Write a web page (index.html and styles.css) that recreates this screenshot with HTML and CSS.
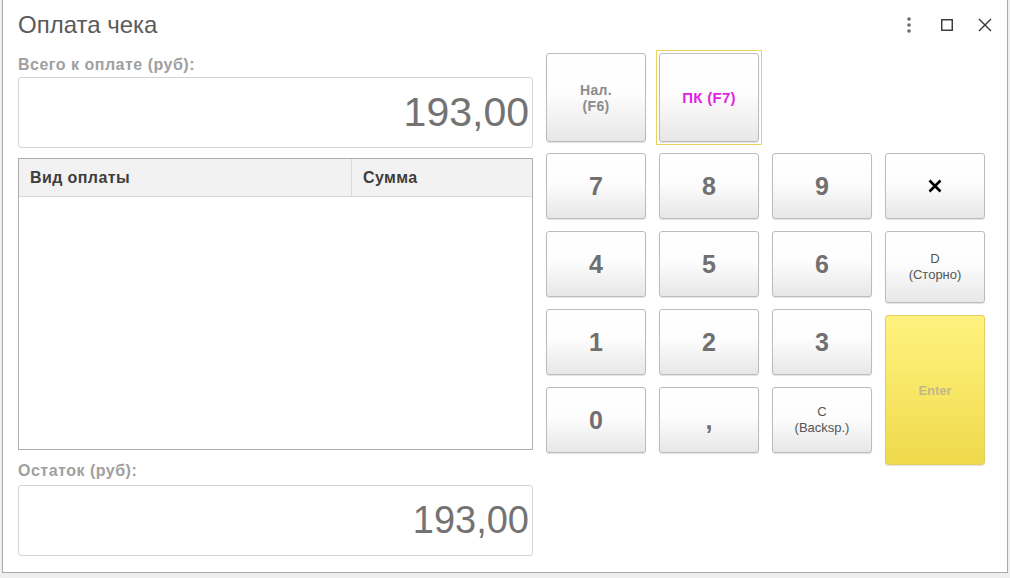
FILE: index.html
```html
<!DOCTYPE html>
<html lang="ru">
<head>
    <meta charset="UTF-8">
    <meta name="viewport" content="width=device-width, initial-scale=1.0">
    <title>Оплата чека</title>
    <link rel="stylesheet" href="styles.css">
</head>
<body>
    <div class="window">
        <header class="titlebar">
            <h1 class="title">Оплата чека</h1>
            <div class="win-actions">
                <span class="win-btn">
                    <svg width="4" height="16" viewBox="0 0 4 16"><circle cx="2" cy="2" r="1.8"/><circle cx="2" cy="8" r="1.8"/><circle cx="2" cy="14" r="1.8"/></svg>
                </span>
                <span class="win-btn">
                    <svg width="12" height="12" viewBox="0 0 12 12"><rect x="0.75" y="0.75" width="10.5" height="10.5"/></svg>
                </span>
                <span class="win-btn">
                    <svg width="14" height="14" viewBox="0 0 14 14"><path d="M1 1 L13 13 M13 1 L1 13"/></svg>
                </span>
            </div>
        </header>

        <div class="content">
            <section class="left">
                <div class="field-label">Всего к оплате (руб):</div>
                <div class="amount">193,00</div>

                <div class="payments">
                    <div class="payments-head">
                        <div class="head-cell col-type">Вид оплаты</div>
                        <div class="head-cell col-sum">Сумма</div>
                    </div>
                </div>

                <div class="field-label label-rest">Остаток (руб):</div>
                <div class="amount amount-rest">193,00</div>
            </section>

            <section class="pad">
                <div class="pay-types">
                    <button class="key key-type">Нал.<br>(F6)</button>
                    <div class="selected">
                        <button class="key key-type key-card">ПК (F7)</button>
                    </div>
                </div>

                <div class="keypad">
                    <div class="digits">
                        <button class="key digit">7</button>
                        <button class="key digit">8</button>
                        <button class="key digit">9</button>
                        <button class="key digit">4</button>
                        <button class="key digit">5</button>
                        <button class="key digit">6</button>
                        <button class="key digit">1</button>
                        <button class="key digit">2</button>
                        <button class="key digit">3</button>
                        <button class="key digit">0</button>
                        <button class="key digit">,</button>
                        <button class="key key-small">C<br>(Backsp.)</button>
                    </div>
                    <div class="side">
                        <button class="key key-clear">
                            <svg width="14" height="14" viewBox="0 0 14 14"><path d="M1.5 1.5 L12.5 12.5 M12.5 1.5 L1.5 12.5"/></svg>
                        </button>
                        <button class="key key-small key-storno">D<br>(Сторно)</button>
                        <button class="key key-enter">Enter</button>
                    </div>
                </div>
            </section>
        </div>
    </div>
</body>
</html>
```

FILE: styles.css
```css
body {
    margin: 0;
    padding-left: 2px;
    background-color: #efefef;
    font-family: "Liberation Sans", Arial, sans-serif;
}
.window {
    width: 1006px;
    height: 573px;
    box-sizing: border-box;
    background-color: #fff;
    border: 1px solid #a9a9a9;
    border-top: none;
}

/* заголовок окна */
.titlebar {
    display: flex;
    height: 50px;
    padding-left: 15px;
}
.title {
    flex: 1;
    margin: 0;
    padding-top: 11px;
    font-size: 24px;
    font-weight: normal;
    line-height: 28px;
    color: #5a5a5a;
}
.win-actions {
    display: flex;
    align-items: center;
    margin-right: 3px;
}
.win-btn {
    width: 38px;
    height: 24px;
    display: flex;
    align-items: center;
    justify-content: center;
}
.win-btn circle {
    fill: #6a6a6a;
}
.win-btn rect, .win-btn path {
    fill: none;
    stroke: #333;
    stroke-width: 1.4;
}

/* левая часть */
.content {
    display: flex;
    padding-left: 15px;
}
.left {
    width: 515px;
}
.field-label {
    margin: 6px 0 3px;
    font-size: 16px;
    font-weight: bold;
    line-height: 18px;
    letter-spacing: 0.5px;
    color: #a0a0a0;
}
.label-rest {
    margin: 12px 0 5px;
}
.amount {
    height: 71px;
    box-sizing: border-box;
    border: 1px solid #d3d3d3;
    border-radius: 3px;
    display: flex;
    align-items: center;
    justify-content: flex-end;
    padding-right: 3px;
    font-size: 41px;
    color: #737373;
}
.amount-rest {
    font-size: 38px;
}
.payments {
    margin-top: 10px;
    height: 292px;
    box-sizing: border-box;
    border: 1px solid #aeaeae;
}
.payments-head {
    display: flex;
    height: 38px;
    box-sizing: border-box;
    background-color: #f2f2f2;
    border-bottom: 1px solid #d9d9d9;
}
.head-cell {
    box-sizing: border-box;
    padding-left: 11px;
    font-size: 16px;
    font-weight: bold;
    line-height: 37px;
    letter-spacing: 0.4px;
    color: #3e3e3e;
}
.col-type {
    width: 333px;
    border-right: 1px solid #d9d9d9;
}
.col-sum {
    flex: 1;
}

/* клавиатура */
.pad {
    margin-left: 13px;
}
.pay-types {
    display: flex;
    align-items: flex-start;
}
.key {
    box-sizing: border-box;
    width: 100px;
    padding: 0;
    border: 1px solid #bcbcbc;
    border-radius: 3px;
    background: linear-gradient(to bottom, #fff 0%, #fdfdfd 45%, #e7e7e7 100%);
    box-shadow: 0 1px 1px rgba(0, 0, 0, 0.12);
    font-family: inherit;
    cursor: pointer;
}
.key-type {
    height: 89px;
    margin-top: 3px;
    font-size: 14px;
    font-weight: bold;
    line-height: 16px;
    letter-spacing: 0.3px;
    color: #8c8c8c;
}
.selected {
    margin-left: 10px;
    padding: 2px;
    border: 1px solid #ead45a;
}
.selected .key-card {
    margin-top: 0;
    font-size: 15px;
    color: #e41ee4;
}
.keypad {
    display: flex;
    margin-top: 8px;
}
.digits {
    display: grid;
    grid-template-columns: repeat(3, 100px);
    grid-auto-rows: 66px;
    gap: 12px 13px;
}
.digit {
    font-size: 25px;
    font-weight: bold;
    line-height: 28px;
    color: #707070;
}
.key-small {
    font-size: 13px;
    line-height: 16px;
    color: #555;
}
.side {
    display: flex;
    flex-direction: column;
    gap: 12px;
    width: 100px;
    margin-left: 13px;
}
.key-clear {
    height: 66px;
    display: flex;
    align-items: center;
    justify-content: center;
}
.key-clear path {
    stroke: #000;
    stroke-width: 2.6;
}
.key-storno {
    height: 72px;
}
.key-enter {
    height: 150px;
    border-color: #e2cf5e;
    background: linear-gradient(to bottom, #fff17e 0%, #f8e766 50%, #efd94c 100%);
    font-size: 13px;
    font-weight: bold;
    color: #c2b88c;
}
```
